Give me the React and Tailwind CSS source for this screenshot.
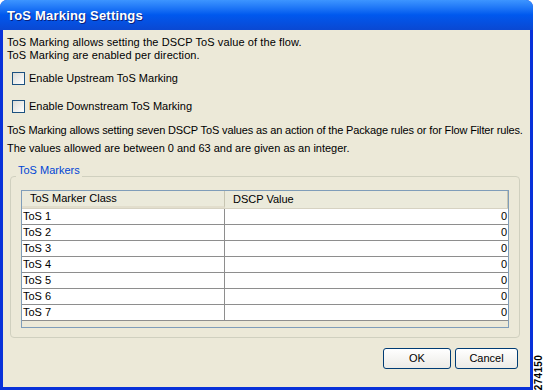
const rows = ['ToS 1', 'ToS 2', 'ToS 3', 'ToS 4', 'ToS 5', 'ToS 6', 'ToS 7'];

function Checkbox({ label, className = '' }) {
  return (
    <div className={`flex items-center ${className}`}>
      <span className="w-[13px] h-[13px] border border-[#1c5180] bg-gradient-to-br from-[#dcdcd7] to-white shrink-0" />
      <span className="ml-[4px] leading-[13px]">{label}</span>
    </div>
  );
}

function XpButton({ children, className = '' }) {
  return (
    <button
      className={`h-[21px] rounded-[3px] border border-[#003c74] bg-gradient-to-b from-white to-[#ecebe6] text-[11px] text-black leading-none ${className}`}
    >
      {children}
    </button>
  );
}

export default function App() {
  return (
    <div className="w-[545px] h-[392px] bg-white flex items-start font-['Liberation_Sans',Arial,sans-serif] text-[11px] text-black">
      {/* Dialog window */}
      <div className="w-[533px] h-[390px] flex flex-col bg-[#0831d9] rounded-t-[7px] overflow-hidden">
        {/* Title bar */}
        <div className="h-[30px] shrink-0 flex items-center px-[7px] bg-gradient-to-b from-[#3d95ff] via-[#0058ee] to-[#0a48d2]">
          <span className="text-white font-bold text-[13px] tracking-[0.2px] pt-[2px] [text-shadow:1px_1px_0_#0a1f7a]">
            ToS Marking Settings
          </span>
        </div>

        {/* Body */}
        <div className="flex-1 mx-[3px] mb-[3px] bg-[#ece9d8] flex flex-col px-[4px] pt-[6px]">
          <p className="leading-[13px] tracking-[0.1px]">ToS Marking allows setting the DSCP ToS value of the flow.</p>
          <p className="leading-[13px] tracking-[0.1px]">ToS Marking are enabled per direction.</p>

          <Checkbox label="Enable Upstream ToS Marking" className="ml-[5px] mt-[10px]" />
          <Checkbox label="Enable Downstream ToS Marking" className="ml-[5px] mt-[15px]" />

          <p className="leading-[13px] mt-[11px] whitespace-nowrap tracking-[-0.14px]">
            ToS Marking allows setting seven DSCP ToS values as an action of the Package rules or for Flow Filter rules.
          </p>
          <p className="leading-[13px] mt-[5px]">The values allowed are between 0 and 63 and are given as an integer.</p>

          {/* Group box */}
          <div className="mt-[9px] ml-[3px] mr-[6px] h-[174px] relative">
            <div className="absolute inset-x-0 top-[12px] bottom-0 border border-[#d0d0bf] rounded-[4px]" />
            <span className="relative ml-[6px] px-[2px] bg-[#ece9d8] text-[#0046d5] leading-[13px] block w-fit">
              ToS Markers
            </span>

            {/* Table */}
            <div className="relative mt-[13px] mx-[11px] h-[138px] border border-[#7f9db9] bg-[#ece9d8] flex flex-col">
              <div className="h-[18px] flex bg-[#ebeadb] border-b border-[#d6d2c2]">
                <div className="w-[203px] pl-[8px] flex items-center border-r border-[#c7c5b2] border-b-2 border-b-[#e2decd]">ToS Marker Class</div>
                <div className="flex-1 pl-[8px] flex items-center border-r border-[#c7c5b2]">DSCP Value</div>
              </div>
              {rows.map((r) => (
                <div key={r} className="h-[16px] flex bg-white border-b border-[#8e8e8e] leading-[15px]">
                  <div className="w-[203px] pl-[1px] border-r border-[#8e8e8e]">{r}</div>
                  <div className="flex-1 text-right pr-[1px]">0</div>
                </div>
              ))}
            </div>
          </div>

          {/* Buttons */}
          <div className="flex justify-end gap-[4px] mt-[10px] mr-[8px]">
            <XpButton className="w-[68px]">OK</XpButton>
            <XpButton className="w-[63px]">Cancel</XpButton>
          </div>
        </div>
      </div>

      {/* Figure number */}
      <div className="flex-1 h-[392px] flex items-end justify-center pb-[2px]">
        <span className="[writing-mode:vertical-rl] rotate-180 font-bold text-[10px] leading-none tracking-[0.3px]">
          274150
        </span>
      </div>
    </div>
  );
}
